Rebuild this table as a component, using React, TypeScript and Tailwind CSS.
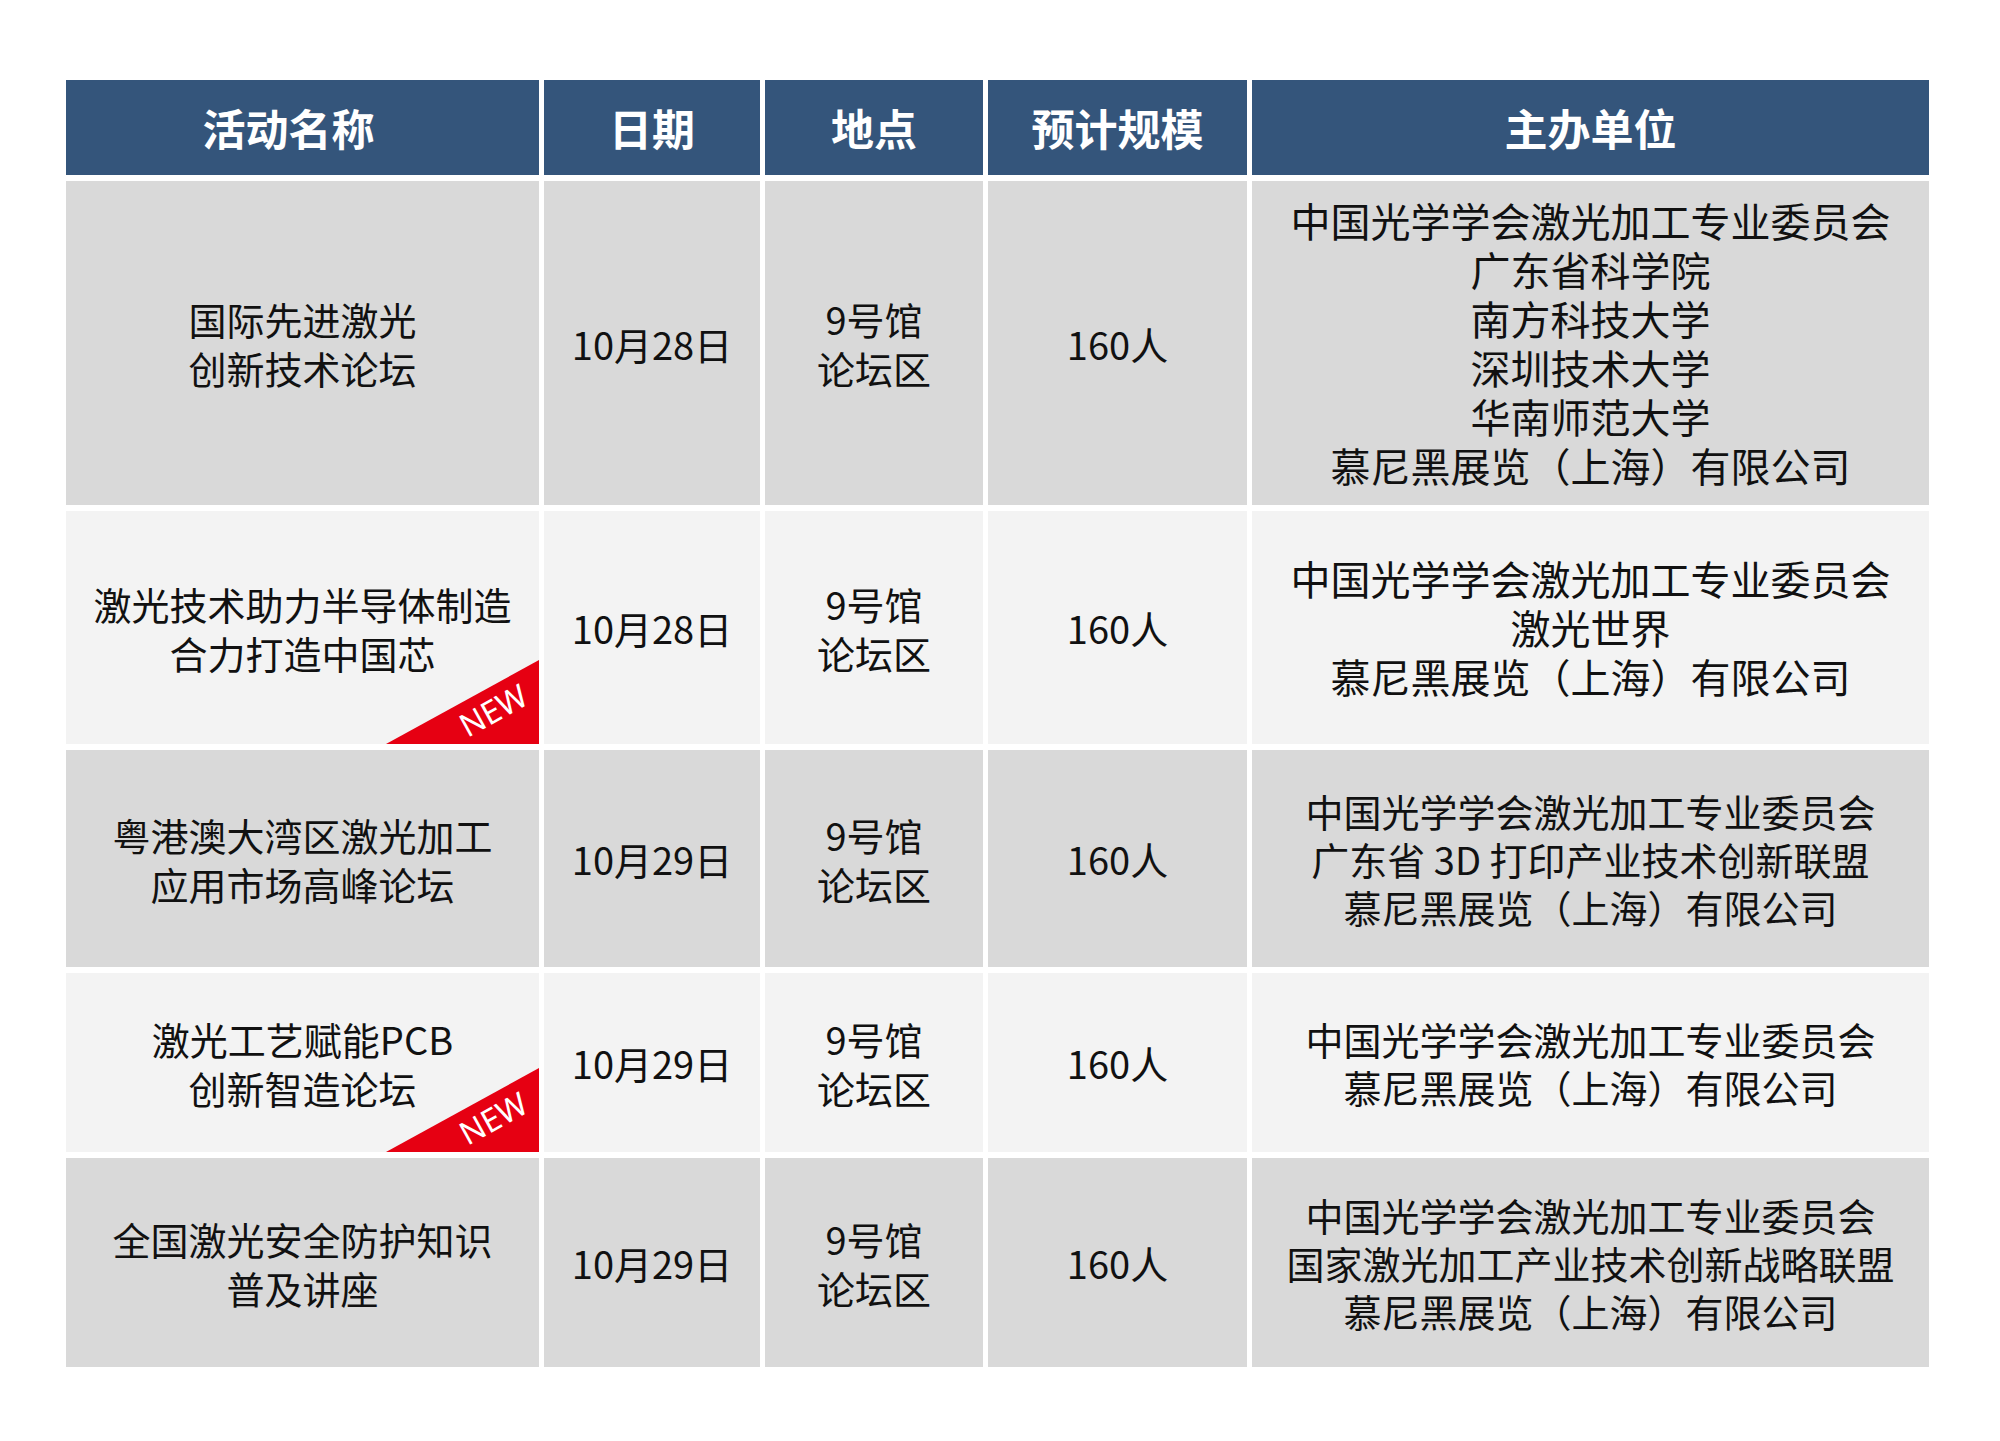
import React from "react";

type Row = {
  name: string[];
  date: string;
  place: string[];
  size: string;
  hosts: string[];
  isNew?: boolean;
  big?: boolean;
};

const ROWS: Row[] = [
  {
    name: ["国际先进激光", "创新技术论坛"],
    date: "10月28日",
    place: ["9号馆", "论坛区"],
    size: "160人",
    hosts: [
      "中国光学学会激光加工专业委员会",
      "广东省科学院",
      "南方科技大学",
      "深圳技术大学",
      "华南师范大学",
      "慕尼黑展览（上海）有限公司",
    ],
    big: true,
  },
  {
    name: ["激光技术助力半导体制造", "合力打造中国芯"],
    date: "10月28日",
    place: ["9号馆", "论坛区"],
    size: "160人",
    hosts: ["中国光学学会激光加工专业委员会", "激光世界", "慕尼黑展览（上海）有限公司"],
    isNew: true,
    big: true,
  },
  {
    name: ["粤港澳大湾区激光加工", "应用市场高峰论坛"],
    date: "10月29日",
    place: ["9号馆", "论坛区"],
    size: "160人",
    hosts: [
      "中国光学学会激光加工专业委员会",
      "广东省 3D 打印产业技术创新联盟",
      "慕尼黑展览（上海）有限公司",
    ],
  },
  {
    name: ["激光工艺赋能PCB", "创新智造论坛"],
    date: "10月29日",
    place: ["9号馆", "论坛区"],
    size: "160人",
    hosts: ["中国光学学会激光加工专业委员会", "慕尼黑展览（上海）有限公司"],
    isNew: true,
  },
  {
    name: ["全国激光安全防护知识", "普及讲座"],
    date: "10月29日",
    place: ["9号馆", "论坛区"],
    size: "160人",
    hosts: [
      "中国光学学会激光加工专业委员会",
      "国家激光加工产业技术创新战略联盟",
      "慕尼黑展览（上海）有限公司",
    ],
  },
];

const HEADERS = ["活动名称", "日期", "地点", "预计规模", "主办单位"];

// red corner ribbon on the first column
function NewBadge() {
  return (
    <div className="absolute right-0 bottom-0 w-[153px] h-[84px]">
      <div className="absolute inset-0 bg-[#e60012] [clip-path:polygon(100%_0,100%_100%,0_100%)]" />
      <span className="absolute left-[107px] top-[50px] -translate-x-1/2 -translate-y-1/2 -rotate-[29deg] font-['Noto_Sans',sans-serif] text-[32px] leading-none text-white">
        NEW
      </span>
    </div>
  );
}

function Lines({ lines, className }: { lines: string[]; className?: string }) {
  return (
    <div className={className}>
      {lines.map((l, i) => (
        <div key={i} className="whitespace-nowrap">
          {l}
        </div>
      ))}
    </div>
  );
}

export default function App() {
  return (
    <main className="w-[2000px] h-[1441px] bg-white pt-[80px] pl-[66px] font-['Noto_Sans_CJK_SC','Noto_Sans',sans-serif] text-[#111]">
      <div className="grid grid-cols-[473px_216px_218px_259px_677px] grid-rows-[95px_324px_233px_217px_179px_209px] gap-x-[5px] gap-y-[6px] w-[1863px]">
        {HEADERS.map((h, i) => (
          <div
            key={h}
            className={`bg-[#34557b] flex items-center justify-center text-white text-[43px] font-bold ${i === 0 ? "pr-[28px]" : ""}`}
          >
            {h}
          </div>
        ))}

        {ROWS.map((row, idx) => {
          const bg = idx % 2 === 0 ? "bg-[#d9d9d9]" : "bg-[#f3f3f3]";
          return (
            <React.Fragment key={idx}>
              <div className={`${bg} relative flex items-center justify-center text-center`}>
                <Lines lines={row.name} className="text-[38px] leading-[49px]" />
                {row.isNew && <NewBadge />}
              </div>
              <div className={`${bg} flex items-center justify-center text-[38px]`}>
                {row.date}
              </div>
              <div className={`${bg} flex items-center justify-center text-center`}>
                <Lines lines={row.place} className="text-[38px] leading-[49px]" />
              </div>
              <div className={`${bg} flex items-center justify-center text-[38px]`}>
                {row.size}
              </div>
              <div className={`${bg} flex items-center justify-center text-center`}>
                <Lines
                  lines={row.hosts}
                  className={row.big ? "text-[40px] leading-[49px]" : "text-[38px] leading-[48px]"}
                />
              </div>
            </React.Fragment>
          );
        })}
      </div>
    </main>
  );
}
